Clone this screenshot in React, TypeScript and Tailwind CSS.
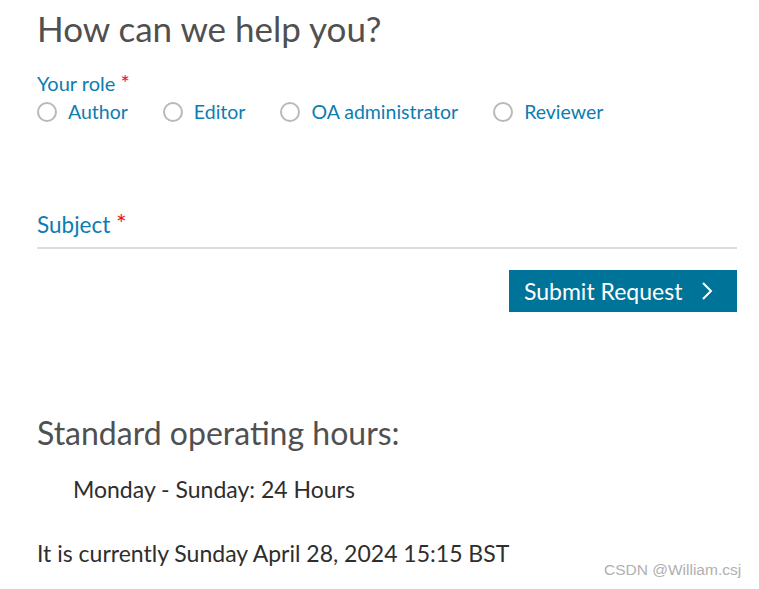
import React, { useState } from 'react';

const roles = ['Author', 'Editor', 'OA administrator', 'Reviewer'];

export default function App() {
  const [role, setRole] = useState<string | null>(null);

  return (
    <div className="relative w-[759px] h-[589px] bg-white overflow-hidden font-['Lato',sans-serif]">
      <div className="pl-[37px] pr-[22px] pt-[6px]">
        <h1 className="text-[35px] leading-[44px] text-[#505050]">How can we help you?</h1>

        <div className="mt-[21px] h-[24px] text-[20px] leading-[24px] text-[#0c7db1]">
          Your role <span className="text-[22px] leading-none text-[#e9141d]">*</span>
        </div>
        <div className="mt-[4px] flex items-center text-[19.5px] leading-[26px] text-[#0c7db1]">
          {roles.map((r) => (
            <label
              key={r}
              onClick={() => setRole(r)}
              className="flex items-center gap-[11px] mr-[35px] cursor-pointer"
            >
              <span className="w-[20px] h-[20px] rounded-full border-2 border-[#b9b9b9] flex items-center justify-center">
                {role === r && <span className="w-[9px] h-[9px] rounded-full bg-[#0c7db1]" />}
              </span>
              {r}
            </label>
          ))}
        </div>

        <div className="mt-[86px] border-b-2 border-[#dcdcdc] pb-[8px]">
          <div className="h-[28px] text-[22.5px] leading-[28px] text-[#0c7db1]">
            Subject <span className="text-[25px] leading-none text-[#e9141d]">*</span>
          </div>
        </div>

        <div className="mt-[21px] flex justify-end">
          <button className="w-[228px] h-[42px] pl-[15px] bg-[#007398] text-white text-[23px] flex items-center gap-[19px]">
            Submit Request
            <svg width="12" height="20" viewBox="0 0 12 20" fill="none" stroke="white" strokeWidth="2">
              <path d="M2 2l8 8-8 8" />
            </svg>
          </button>
        </div>

        <h2 className="mt-[101px] text-[32px] leading-[40px] text-[#505050]">Standard operating hours:</h2>
        <p className="mt-[22px] pl-[36px] text-[23px] leading-[28px] text-[#2e2e2e]">Monday - Sunday: 24 Hours</p>
        <p className="mt-[36px] text-[23px] leading-[28px] text-[#2e2e2e]">It is currently Sunday April 28, 2024 15:15 BST</p>
      </div>

      <div className="absolute left-[604px] top-[560px] text-[15.5px] leading-[20px] text-[#b0b0b0] font-['Liberation_Sans',sans-serif]">
        CSDN @William.csj
      </div>
    </div>
  );
}
